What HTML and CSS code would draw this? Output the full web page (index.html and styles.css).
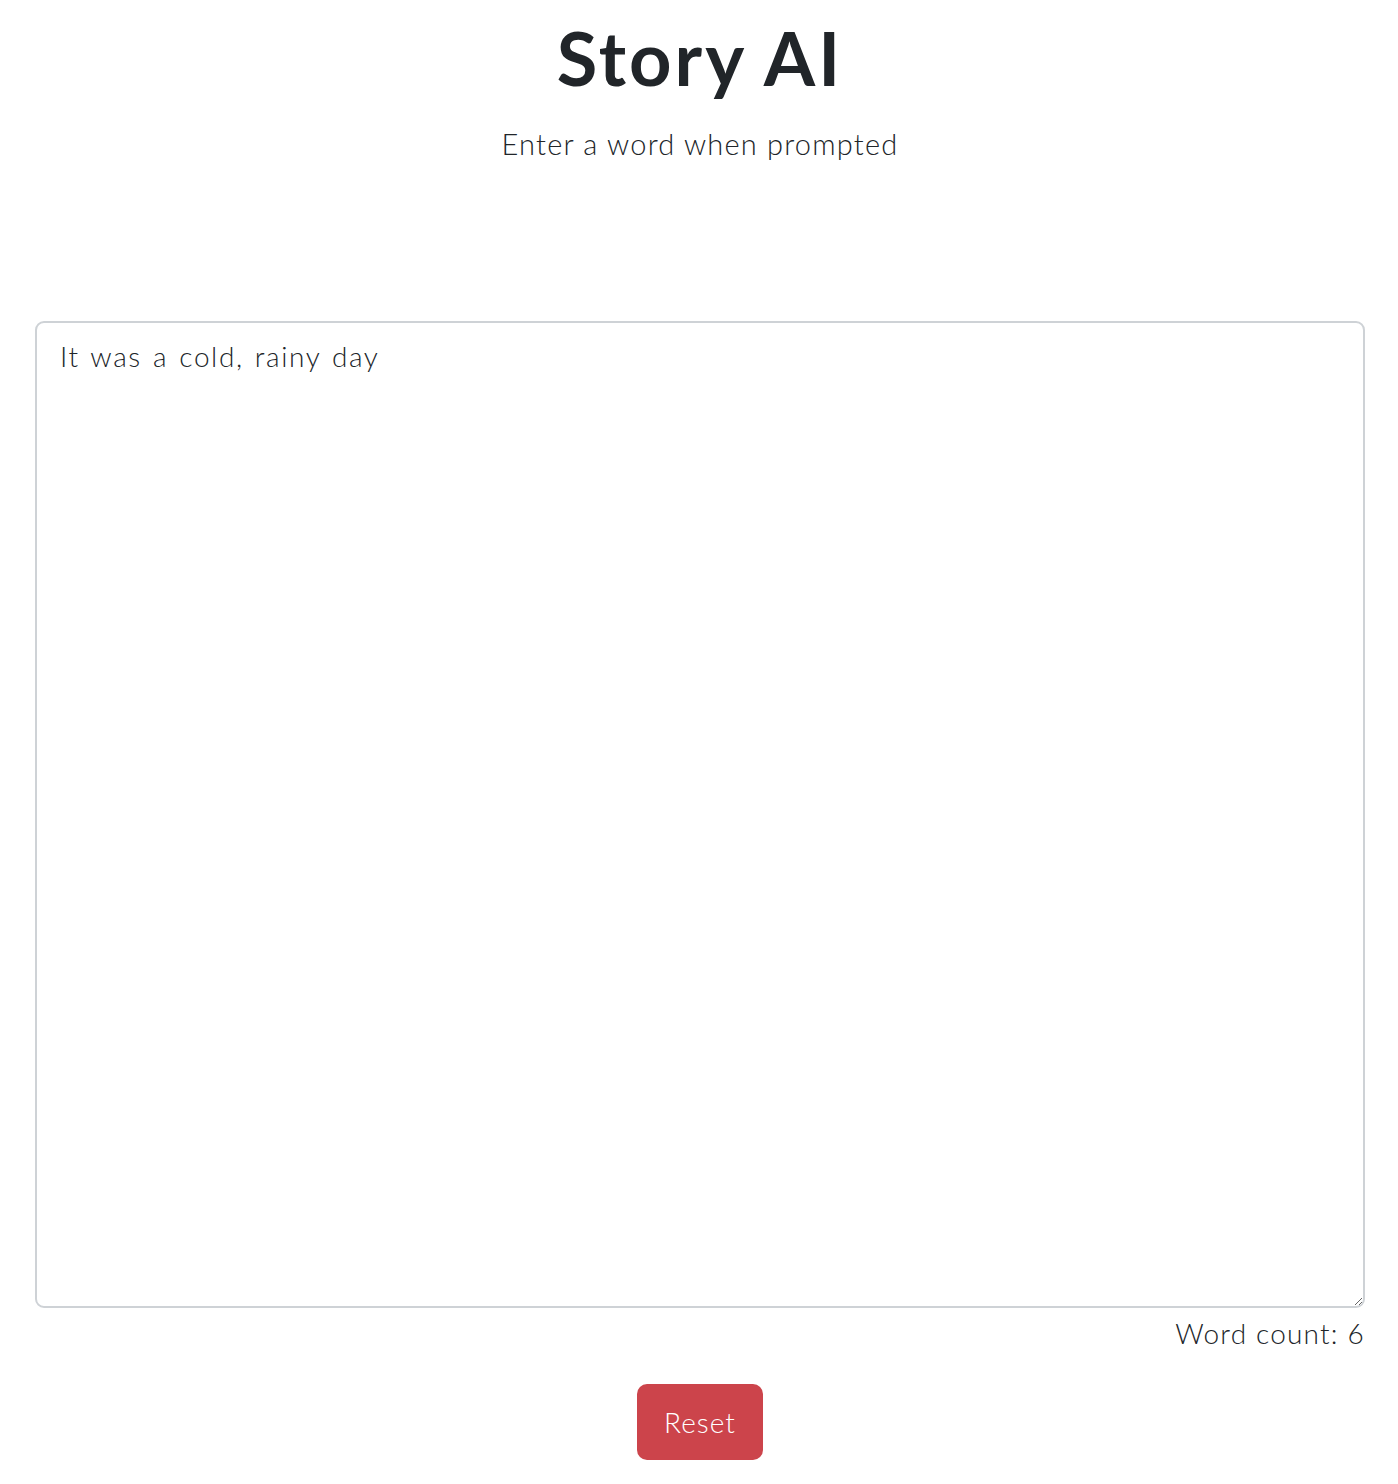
FILE: index.html
```html
<!DOCTYPE html>
<html>
<head>
<meta charset="utf-8">
<link rel="stylesheet" href="styles.css">
</head>
<body>
<main class="page">
  <h1 class="title">Story AI</h1>
  <p class="subtitle">Enter a word when prompted</p>
  <div class="editor">
    <textarea class="story">It was a cold, rainy day</textarea>
    <div class="count">Word count: 6</div>
  </div>
  <div class="actions">
    <button class="reset">Reset</button>
  </div>
</main>
</body>
</html>
```
FILE: styles.css
```css
html, body {
  margin: 0;
  padding: 0;
  background: #fff;
}
body {
  font-family: "Lato", "Open Sans", sans-serif;
  color: #212529;
}
.page {
  display: flex;
  flex-direction: column;
  align-items: center;
  padding: 0 33px 0 35px;
}
.title {
  margin: 14px 0 0;
  font-size: 74px;
  font-weight: 700;
  line-height: 1.2;
  letter-spacing: 3px;
}
.subtitle {
  margin: 24px 0 0;
  font-size: 29px;
  font-weight: 300;
  line-height: 1.2;
  letter-spacing: 1.2px;
}
.editor {
  align-self: stretch;
  margin-top: 159px;
  display: flex;
  flex-direction: column;
}
.story {
  box-sizing: border-box;
  width: 100%;
  height: 987px;
  border: 2px solid #ced2d6;
  border-radius: 9px;
  padding: 12px 23px;
  font-family: inherit;
  font-size: 28px;
  font-weight: 300;
  color: #212529;
  line-height: 1.5;
  letter-spacing: 1.6px;
  word-spacing: 2px;
  resize: vertical;
  outline: none;
}
.count {
  align-self: flex-end;
  margin-top: 6px;
  font-size: 28px;
  font-weight: 300;
  line-height: 1.4;
  letter-spacing: 1.2px;
}
.actions {
  margin-top: 31px;
}
.reset {
  width: 126px;
  height: 76px;
  border: none;
  border-radius: 10px;
  background: #cc444b;
  color: #fff;
  font-family: inherit;
  font-size: 28px;
  font-weight: 300;
  letter-spacing: 1px;
}
```
